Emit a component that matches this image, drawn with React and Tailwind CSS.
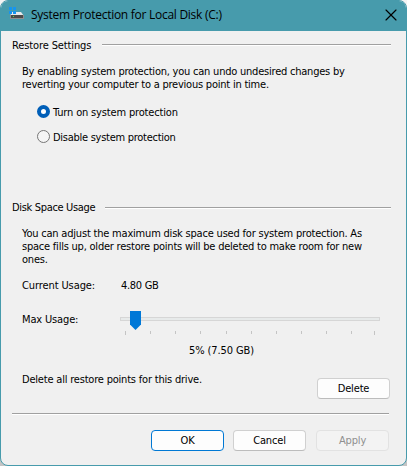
import { X } from 'lucide-react';

const ticks = [125, 150, 175, 200, 226, 251, 276, 301, 326, 351, 374];

function DriveIcon() {
  return (
    <svg className="mt-[6px] h-4 w-4 shrink-0" viewBox="0 0 16 16">
      <path d="M3 5h9l3 4H1z" fill="#e9e9e9" />
      <path d="M1 8h14v4H1z" fill="#8e9090" />
      <path d="M2 8h12v3H2z" fill="#4b4b4b" />
      <path d="M4 9h1v1H4z" fill="#4de04d" />
      <path d="M0 0h3v3H0zM4 0h3v3H4zM0 4h3v3H0zM4 4h3v3H4z" fill="#1695f0" />
    </svg>
  );
}

function SectionHeader({ children, className }) {
  return (
    <div className={`flex h-[13px] items-start justify-between pr-[15px] pl-[11px] ${className}`}>
      {children}
    </div>
  );
}

function Rule({ className }) {
  return <div className={`h-[2px] border-t border-b border-t-[#a0a0a0] border-b-white ${className}`} />;
}

function Button({ children, className }) {
  return (
    <button
      className={`flex h-[21px] w-[73px] shrink-0 items-center justify-center rounded-[4px] border tracking-[-0.15px] ${className}`}
    >
      {children}
    </button>
  );
}

function Radio({ checked, children, className }) {
  return (
    <label className={`flex h-[13px] items-center pl-9 ${className}`}>
      <span
        className={`mr-[3px] box-border h-[13px] w-[13px] shrink-0 rounded-full ${
          checked ? 'border-4 border-[#005fb8] bg-white' : 'border border-[#767676] bg-[#f5f5f5]'
        }`}
      />
      {children}
    </label>
  );
}

export default function App() {
  return (
    <div className="h-[466px] w-[407px] bg-linear-to-b from-[#f4f4f4] to-[#c4c4c4] font-['DejaVu_Sans_Condensed','DejaVu_Sans',sans-serif] text-[11px] leading-[13px] tracking-[-0.22px] whitespace-nowrap text-black">
      <div className="flex h-[466px] w-[407px] flex-col overflow-hidden rounded-[8px] border border-[#479bac] bg-[#f0f0f0]">
        <header className="flex h-[30px] shrink-0 items-start bg-[#479bac] pl-2">
          <DriveIcon />
          <span className="mt-1.5 ml-[6px] font-['Open_Sans',sans-serif] text-[12px] leading-4 tracking-[-0.27px]">
            System Protection for Local Disk (C:)
          </span>
          <X className="mt-1 mr-[5px] ml-auto h-5 w-5" strokeWidth={1.4} />
        </header>

        <SectionHeader className="mt-[8px]">
          <span className="tracking-[-0.12px]">Restore Settings</span>
          <Rule className="mt-[5px] w-[289px]" />
        </SectionHeader>
        <div className="mt-[13px] pl-[21px]">
          <p>By enabling system protection, you can undo undesired changes by</p>
          <p>reverting your computer to a previous point in time.</p>
        </div>
        <Radio checked className="mt-[14px]">
          <span className="pt-px tracking-[-0.16px]">Turn on system protection</span>
        </Radio>
        <Radio className="mt-[12px]">
          <span className="pt-px tracking-[-0.27px]">Disable system protection</span>
        </Radio>

        <SectionHeader className="mt-[58px]">
          <span className="tracking-[-0.33px]">Disk Space Usage</span>
          <Rule className="mt-[6px] w-[286px]" />
        </SectionHeader>
        <div className="mt-[13px] pl-[21px]">
          <p className="tracking-[-0.2px]">You can adjust the maximum disk space used for system protection. As</p>
          <p>space fills up, older restore points will be deleted to make room for new</p>
          <p>ones.</p>
        </div>
        <div className="mt-[13px] flex pl-[21px]">
          <span className="w-[99px] tracking-[-0.1px]">Current Usage:</span>
          <span className="tracking-[-0.3px]">4.80 GB</span>
        </div>
        <div className="mt-[19px] flex h-[26px] pl-[21px]">
          <span className="mt-[2px] w-[98px] tracking-[-0.15px]">Max Usage:</span>
          <div className="relative w-[260px]">
            <div className="mt-[6px] h-[4px] border border-[#d6d6d6] bg-[#e7eaea]" />
            <svg className="absolute top-0 left-[10px] h-[19px] w-[11px]" viewBox="0 0 11 19">
              <path d="M0 0h11v13.5L5.5 19 0 13.5z" fill="#0078d7" />
            </svg>
            {ticks.map((x, i) => (
              <span
                key={x}
                className={`absolute top-5 w-px bg-[#c4c4c4] ${i % 10 === 0 ? 'h-1' : 'h-[3px]'}`}
                style={{ left: x - 120 }}
              />
            ))}
          </div>
        </div>
        <div className="mt-[7px] pl-[188px] tracking-[-0.1px]">5% (7.50 GB)</div>
        <div className="mt-[16px] flex h-[26px] justify-between pr-4 pl-[21px]">
          <span className="tracking-[-0.2px]">Delete all restore points for this drive.</span>
          <Button className="mt-[5px] border-[#d0d0d0] border-b-[#bcbcbc] bg-[#fdfdfd]">Delete</Button>
        </div>

        <Rule className="mt-[14px] ml-[11px] w-[377px]" />
        <div className="mt-[15px] flex justify-end pr-[17px]">
          <Button className="mr-[9px] border-[#0078d4] bg-[#fdfdfd]">OK</Button>
          <Button className="mr-[10px] border-[#d0d0d0] border-b-[#bcbcbc] bg-[#fdfdfd]">Cancel</Button>
          <Button className="border-[#e2e2e2] bg-[#f3f3f3] text-[#8f8f8f]">Apply</Button>
        </div>
      </div>
    </div>
  );
}
